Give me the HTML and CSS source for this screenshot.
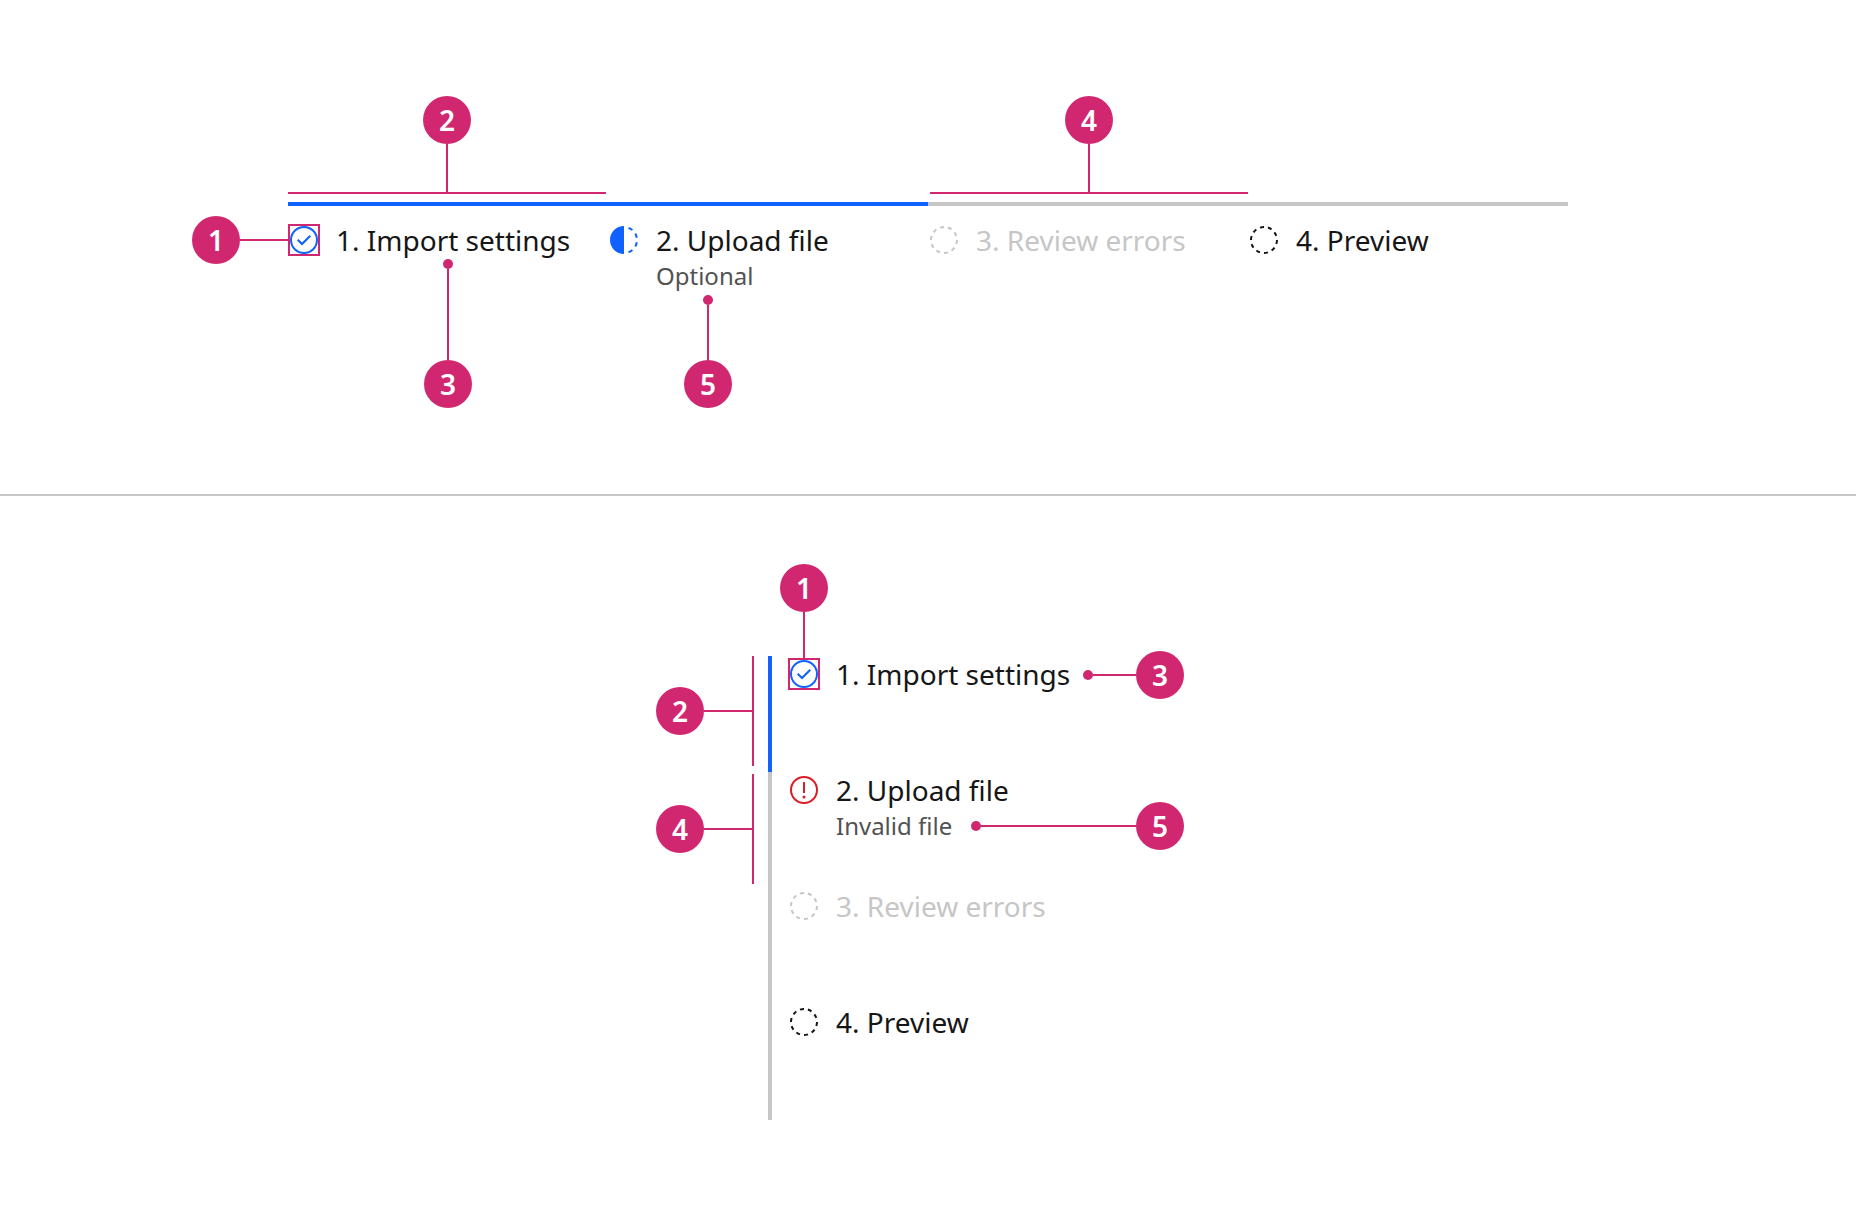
FILE: index.html
```html
<!DOCTYPE html>
<html lang="en">
<head>
<meta charset="utf-8">
<meta name="viewport" content="width=device-width, initial-scale=1">
<title>Progress indicator anatomy</title>
<link rel="stylesheet" href="styles.css">
</head>
<body>
<svg class="sprite" aria-hidden="true">
  <symbol id="icon-complete" viewBox="0 0 32 32">
    <circle cx="16" cy="16" r="13" fill="none" stroke="currentColor" stroke-width="2"/>
    <path d="M14 21.414L9 16.413 10.413 15 14 18.586 21.585 11 23 12.415z"/>
  </symbol>
  <symbol id="icon-current" viewBox="0 0 32 32">
    <path d="M23.764 6.859l1.285-1.531A13.976 13.976 0 0020.867 2.887l-.683 1.878A11.973 11.973 0 0123.764 6.859zM27.81 14l1.968-.413A13.889 13.889 0 0028.14 9.046L26.409 10A12.52 12.52 0 0127.81 14zM20.184 27.235l.683 1.878a13.976 13.976 0 004.182-2.441l-1.285-1.531A11.973 11.973 0 0120.184 27.235zM26.409 22L28.14 23a14.14 14.14 0 001.638-4.587L27.808 18.066A12.152 12.152 0 0126.409 22zM16 30V2a14 14 0 000 28z"/>
  </symbol>
  <symbol id="icon-upcoming" viewBox="0 0 32 32">
    <path d="M7.7 4.7a14.7 14.7 0 00-3 3.1L6.3 9A13.26 13.26 0 018.9 6.3zM4.6 12.3l-1.9-.6A12.51 12.51 0 002 16H4A11.48 11.48 0 014.6 12.3zM2.7 20.4a14.4 14.4 0 002 3.9l1.6-1.2a12.89 12.89 0 01-1.7-3.3zM7.8 27.3a14.4 14.4 0 003.9 2l.6-1.9A12.89 12.89 0 019 25.7zM11.7 2.7l.6 1.9A11.48 11.48 0 0116 4V2A12.51 12.51 0 0011.7 2.7zM24.2 27.3a15.18 15.18 0 003.1-3.1L25.7 23A11.53 11.53 0 0123 25.7zM27.4 19.7l1.9.6A15.47 15.47 0 0030 16H28A11.48 11.48 0 0127.4 19.7zM29.2 11.6a14.4 14.4 0 00-2-3.9L25.6 8.9a12.89 12.89 0 011.7 3.3zM24.1 4.6a14.4 14.4 0 00-3.9-2l-.6 1.9a12.89 12.89 0 013.3 1.7zM20.3 29.3l-.6-1.9A11.48 11.48 0 0116 28v2A21.42 21.42 0 0020.3 29.3z"/>
  </symbol>
  <symbol id="icon-invalid" viewBox="0 0 32 32">
    <circle cx="16" cy="16" r="13" fill="none" stroke="currentColor" stroke-width="2"/>
    <path d="M15 8h2v11h-2z"/>
    <circle cx="16" cy="23" r="1.5"/>
  </symbol>
</svg>

<main>
  <section class="panel panel--horizontal" aria-label="Horizontal progress indicator">
    <ol class="progress progress--horizontal">
      <li class="step step--done">
        <span class="icon icon--blue icon--framed">
          <svg aria-hidden="true"><use href="#icon-complete"/></svg>
          <span class="callout callout--row callout--icon-left"><span class="badge">1</span><span class="line"></span></span>
        </span>
        <div class="text"><p class="label">1. Import settings</p></div>
        <span class="callout callout--column callout--bar"><span class="badge">2</span><span class="line"></span><span class="bracket"></span></span>
        <span class="callout callout--column callout--label-below"><span class="dot"></span><span class="line"></span><span class="badge">3</span></span>
      </li>
      <li class="step step--done">
        <span class="icon icon--blue"><svg aria-hidden="true"><use href="#icon-current"/></svg></span>
        <div class="text"><p class="label">2. Upload file</p><p class="helper">Optional</p></div>
        <span class="callout callout--column callout--helper-below"><span class="dot"></span><span class="line"></span><span class="badge">5</span></span>
      </li>
      <li class="step step--disabled">
        <span class="icon"><svg aria-hidden="true"><use href="#icon-upcoming"/></svg></span>
        <div class="text"><p class="label">3. Review errors</p></div>
        <span class="callout callout--column callout--bar callout--bar-next"><span class="badge">4</span><span class="line"></span><span class="bracket"></span></span>
      </li>
      <li class="step">
        <span class="icon"><svg aria-hidden="true"><use href="#icon-upcoming"/></svg></span>
        <div class="text"><p class="label">4. Preview</p></div>
      </li>
    </ol>
  </section>

  <section class="panel panel--vertical" aria-label="Vertical progress indicator">
    <ol class="progress progress--vertical">
      <li class="step step--done">
        <span class="icon icon--blue icon--framed">
          <svg aria-hidden="true"><use href="#icon-complete"/></svg>
          <span class="callout callout--column callout--icon-above"><span class="badge">1</span><span class="line"></span></span>
        </span>
        <div class="text"><p class="label">1. Import settings</p></div>
        <span class="callout callout--row callout--side"><span class="badge">2</span><span class="line"></span><span class="bracket"></span></span>
        <span class="callout callout--row callout--label-right"><span class="dot"></span><span class="line"></span><span class="badge">3</span></span>
      </li>
      <li class="step">
        <span class="icon icon--red"><svg aria-hidden="true"><use href="#icon-invalid"/></svg></span>
        <div class="text"><p class="label">2. Upload file</p><p class="helper">Invalid file</p></div>
        <span class="callout callout--row callout--side callout--side-next"><span class="badge">4</span><span class="line"></span><span class="bracket"></span></span>
        <span class="callout callout--row callout--helper-right"><span class="dot"></span><span class="line"></span><span class="badge">5</span></span>
      </li>
      <li class="step step--disabled">
        <span class="icon"><svg aria-hidden="true"><use href="#icon-upcoming"/></svg></span>
        <div class="text"><p class="label">3. Review errors</p></div>
      </li>
      <li class="step">
        <span class="icon"><svg aria-hidden="true"><use href="#icon-upcoming"/></svg></span>
        <div class="text"><p class="label">4. Preview</p></div>
      </li>
    </ol>
  </section>
</main>
</body>
</html>
```
FILE: styles.css
```css
:root {
  --text: #161616;
  --text-helper: #525252;
  --muted: #c6c6c6;
  --blue: #0f62fe;
  --red: #da1e28;
  --magenta: #d12771;
}

* {
  box-sizing: border-box;
}

body {
  margin: 0;
  background: #fff;
  color: var(--text);
  font-family: "Noto Sans", sans-serif;
}

p,
ol {
  margin: 0;
  padding: 0;
}

ol {
  list-style: none;
}

.sprite {
  display: none;
}

/* Panels */
.panel--horizontal {
  min-height: 496px;
  padding-top: 202px;
  border-bottom: 2px solid var(--muted);
}

.panel--vertical {
  padding: 160px 0 96px;
}

/* Progress indicator */
.progress {
  margin: 0 auto;
}

.progress--horizontal {
  display: grid;
  grid-template-columns: repeat(4, 1fr);
  max-width: 1280px;
}

.progress--vertical {
  max-width: 320px;
}

.step {
  position: relative;
  display: flex;
  align-items: flex-start;
  gap: 16px;
  border: 0 solid var(--muted);
}

.progress--horizontal .step {
  padding-top: 18px;
  border-top-width: 4px;
}

.progress--vertical .step {
  min-height: 116px;
  padding: 2px 0 0 16px;
  border-left-width: 4px;
}

.step--done {
  border-color: var(--blue);
}

.step--disabled {
  color: var(--muted);
}

.label {
  font-size: 28px;
  line-height: 32px;
  white-space: nowrap;
}

.helper {
  margin-top: 4px;
  color: var(--text-helper);
  font-size: 24px;
  line-height: 32px;
  white-space: nowrap;
}

.icon {
  position: relative;
  flex: none;
  width: 32px;
  height: 32px;
}

.icon svg {
  display: block;
  width: 32px;
  height: 32px;
  fill: currentColor;
}

.icon--blue {
  color: var(--blue);
}

.icon--red {
  color: var(--red);
}

.icon--framed {
  outline: 2px solid var(--magenta);
  outline-offset: -2px;
}

/* Numbered callouts laid over the indicator */
.callout {
  position: absolute;
  display: flex;
  align-items: center;
}

.callout--column {
  flex-direction: column;
}

.badge {
  flex: none;
  width: 48px;
  height: 48px;
  border-radius: 50%;
  background: var(--magenta);
  color: #fff;
  font-size: 28px;
  font-weight: 600;
  line-height: 48px;
  text-align: center;
}

.dot {
  flex: none;
  width: 10px;
  height: 10px;
  border-radius: 50%;
  background: var(--magenta);
}

.line {
  flex: 1;
  background: var(--magenta);
}

.callout--column .line {
  width: 2px;
}

.callout--row .line {
  height: 2px;
}

.bracket {
  flex: none;
  align-self: stretch;
  background: var(--magenta);
}

.callout--column .bracket {
  height: 2px;
}

.callout--row .bracket {
  width: 2px;
}

.callout--icon-left {
  top: -8px;
  right: 100%;
  width: 96px;
}

.callout--icon-above {
  bottom: 100%;
  left: -8px;
  height: 94px;
}

.callout--bar {
  top: -110px;
  left: 0;
  width: calc(100% - 2px);
  height: 98px;
}

.callout--bar-next {
  left: 2px;
}

.callout--label-below {
  top: 53px;
  left: 0;
  width: 100%;
  height: 149px;
}

.callout--helper-below {
  top: 89px;
  left: 76px;
  height: 113px;
}

.callout--side {
  top: 0;
  left: -116px;
  width: 98px;
  height: 110px;
}

.callout--side-next {
  top: 2px;
}

.callout--label-right {
  top: -5px;
  left: 311px;
  width: 101px;
}

.callout--helper-right {
  top: 30px;
  left: 199px;
  width: 213px;
}
```
